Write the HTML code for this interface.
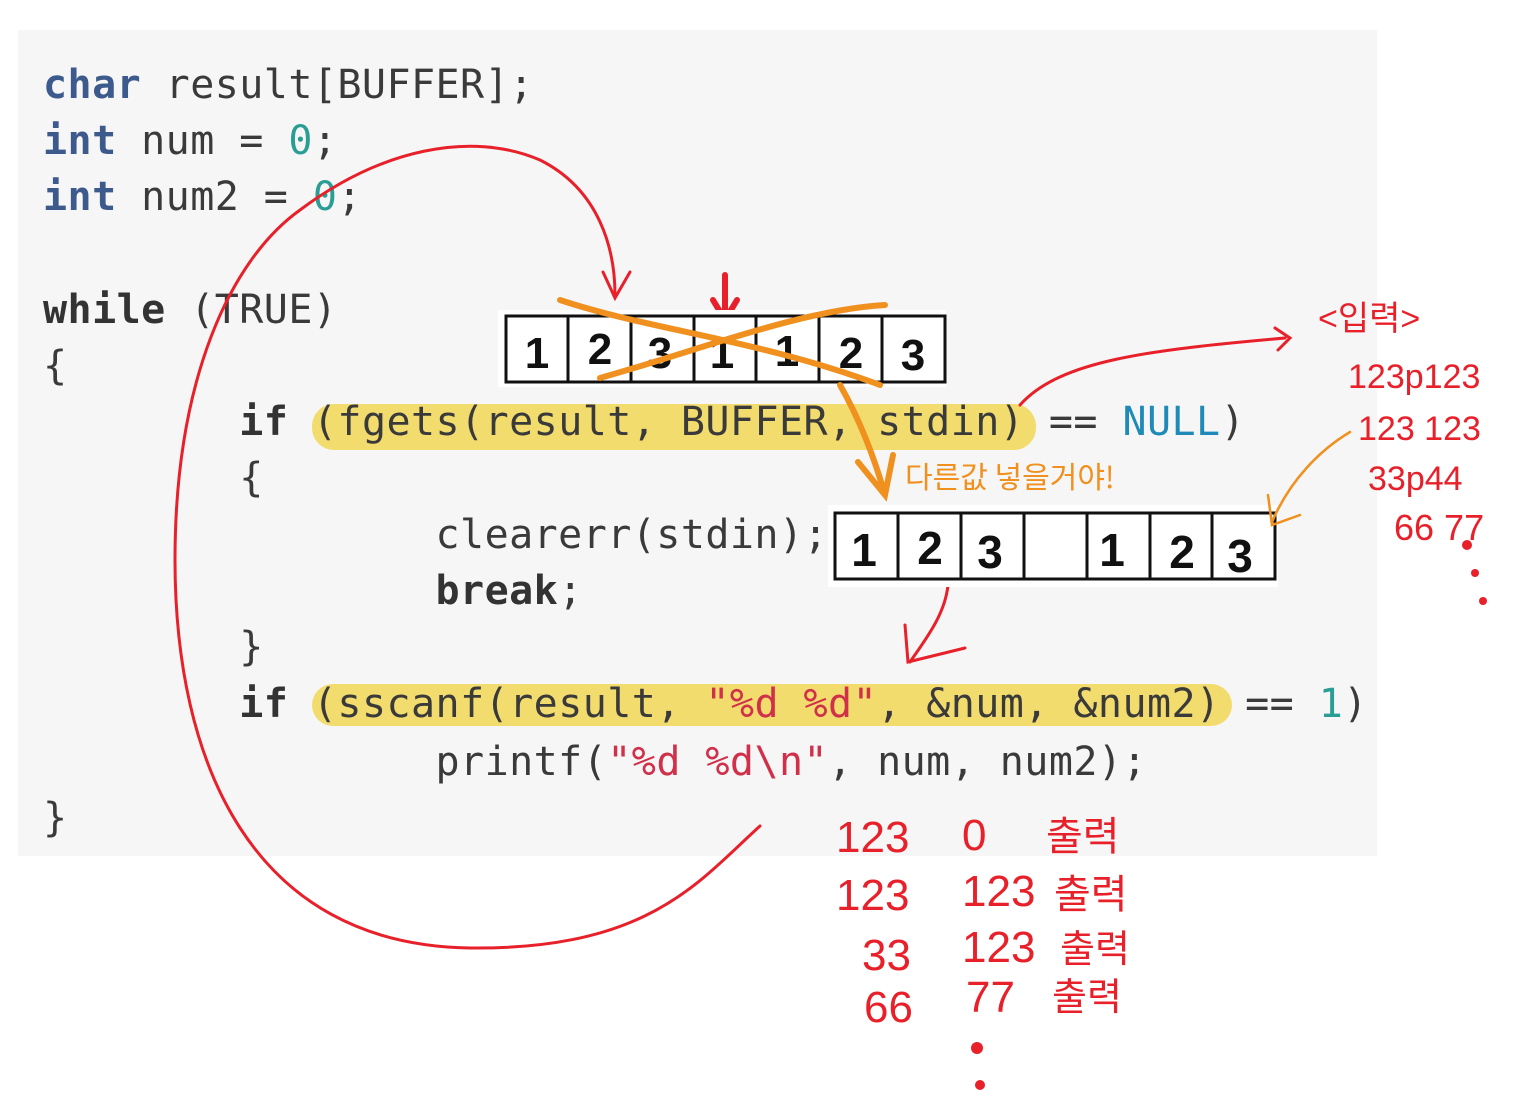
<!DOCTYPE html>
<html><head><meta charset="utf-8"><style>
body{margin:0;width:1522px;height:1111px;background:#fff;position:relative;overflow:hidden}
.code{position:absolute;left:18px;top:30px;width:1359px;height:826px;background:#f6f6f6}
.l{position:absolute;left:43px;height:56px;line-height:56px;font-family:"DejaVu Sans Mono","Liberation Mono",monospace;font-size:40px;letter-spacing:0.45px;color:#3a3a3a;white-space:pre}
.k{color:#3d5a8c;font-weight:bold}.b{font-weight:bold;color:#333}.n{color:#2a9d95}.u{color:#1f8ab8}.s{color:#d0304a}
.hl{position:absolute;background:#f3dc6e;border-radius:22px}
svg{position:absolute;left:0;top:0}
.ann{font-family:"Liberation Sans","Noto Sans CJK KR",sans-serif;fill:#e8202a}
</style></head><body>
<div class="code"></div>
<div class="hl" style="left:312px;top:404px;width:724px;height:46px"></div>
<div class="hl" style="left:312px;top:684px;width:920px;height:42px"></div>
<div class="l" style="top:57px"><span class="k">char</span> result[BUFFER];</div>
<div class="l" style="top:113px"><span class="k">int</span> num = <span class="n">0</span>;</div>
<div class="l" style="top:169px"><span class="k">int</span> num2 = <span class="n">0</span>;</div>
<div class="l" style="top:282px"><span class="b">while</span> (TRUE)</div>
<div class="l" style="top:338px">{</div>
<div class="l" style="top:394px">        <span class="b">if</span> (fgets(result, BUFFER, stdin) == <span class="u">NULL</span>)</div>
<div class="l" style="top:450px">        {</div>
<div class="l" style="top:507px">                clearerr(stdin);</div>
<div class="l" style="top:563px">                <span class="b">break</span>;</div>
<div class="l" style="top:619px">        }</div>
<div class="l" style="top:676px">        <span class="b">if</span> (sscanf(result, <span class="s">"%d %d"</span>, &amp;num, &amp;num2) == <span class="n">1</span>)</div>
<div class="l" style="top:734px">                printf(<span class="s">"%d %d\n"</span>, num, num2);</div>
<div class="l" style="top:790px">}</div>
<svg width="1522" height="1111" viewBox="0 0 1522 1111">
<g fill="none" stroke="#e8202a" stroke-width="3" stroke-linecap="round">
<path d="M760,826 C700,880 650,950 470,948 C250,945 175,760 175,560 C175,380 230,260 300,210 C380,150 470,130 540,160 C600,190 615,250 615,295"/>
<path d="M603,272 L615,298 L630,272"/>
<path d="M1020,405 C1060,360 1150,350 1285,338 M1275,328 L1290,338 L1278,350"/>
<path d="M948,585 C945,615 925,640 910,662 M905,625 L908,662 L965,648"/>
</g>
<path d="M725,275 L725,318 M713,300 L725,320 L737,300" fill="none" stroke="#e8202a" stroke-width="6" stroke-linecap="round"/>
<rect x="498" y="310" width="448" height="77" fill="#fff"/>
<rect x="506" y="316" width="439" height="66" fill="#fff" stroke="#111" stroke-width="3"/>
<g stroke="#111" stroke-width="3"><line x1="568" y1="316" x2="568" y2="382"/><line x1="631" y1="316" x2="631" y2="382"/><line x1="694" y1="316" x2="694" y2="382"/><line x1="756" y1="316" x2="756" y2="382"/><line x1="819" y1="316" x2="819" y2="382"/><line x1="882" y1="316" x2="882" y2="382"/></g>
<g font-family="Liberation Sans,sans-serif" font-weight="bold" font-size="44" fill="#111" text-anchor="middle">
<text x="537" y="368">1</text><text x="600" y="364">2</text><text x="660" y="368">3</text><text x="722" y="368">1</text><text x="787" y="366">1</text><text x="851" y="368">2</text><text x="913" y="370">3</text>
</g>
<rect x="828" y="505" width="450" height="82" fill="#fff"/>
<rect x="835" y="513" width="440" height="66" fill="#fff" stroke="#111" stroke-width="3"/>
<g stroke="#111" stroke-width="3"><line x1="898" y1="513" x2="898" y2="579"/><line x1="961" y1="513" x2="961" y2="579"/><line x1="1024" y1="513" x2="1024" y2="579"/><line x1="1087" y1="513" x2="1087" y2="579"/><line x1="1150" y1="513" x2="1150" y2="579"/><line x1="1212" y1="513" x2="1212" y2="579"/></g>
<g font-family="Liberation Sans,sans-serif" font-weight="bold" font-size="46" fill="#111" text-anchor="middle">
<text x="864" y="566">1</text><text x="930" y="564">2</text><text x="990" y="568">3</text><text x="1112" y="566">1</text><text x="1182" y="568">2</text><text x="1240" y="572">3</text>
</g>
<g fill="none" stroke="#f0901e" stroke-width="6" stroke-linecap="round">
<path d="M560,300 C650,330 760,340 880,385"/>
<path d="M600,378 C700,350 800,310 885,305"/>
<path d="M840,385 C860,420 875,460 885,495 M858,462 L885,495 L893,455"/>
</g>
<g fill="none" stroke="#f0901e" stroke-width="2.5" stroke-linecap="round">
<path d="M1350,432 C1320,450 1290,480 1272,522 M1268,495 L1272,525 L1300,515"/>
</g>
<text x="905" y="488" font-family="Noto Sans CJK KR,sans-serif" font-size="30" fill="#f0901e">다른값 넣을거야!</text>
<g class="ann">
<text x="1318" y="330" font-size="34">&lt;입력&gt;</text>
<text x="1348" y="388" font-size="34">123p123</text>
<text x="1358" y="440" font-size="34">123 123</text>
<text x="1368" y="490" font-size="34">33p44</text>
<text x="1394" y="540" font-size="36">66  77</text>
<circle cx="1467" cy="545" r="5"/><circle cx="1475" cy="573" r="4"/><circle cx="1483" cy="601" r="4"/>
<text x="836" y="852" font-size="44">123</text><text x="962" y="850" font-size="44">0</text><text x="1046" y="850" font-size="40">출력</text>
<text x="836" y="910" font-size="44">123</text><text x="962" y="906" font-size="44">123</text><text x="1054" y="908" font-size="40">출력</text>
<text x="862" y="970" font-size="44">33</text><text x="962" y="962" font-size="44">123</text><text x="1060" y="962" font-size="38">출력</text>
<text x="864" y="1022" font-size="44">66</text><text x="966" y="1012" font-size="44">77</text><text x="1052" y="1010" font-size="38">출력</text>
<circle cx="977" cy="1048" r="6"/><circle cx="980" cy="1085" r="5"/>
</g>
</svg>
</body></html>
